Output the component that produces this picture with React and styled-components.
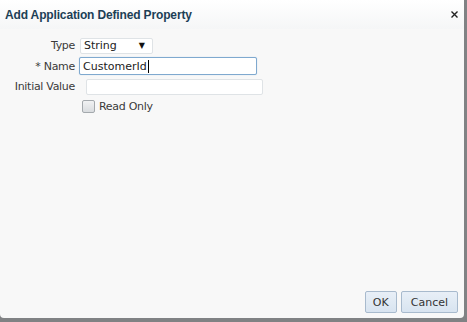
import React from "react";
import styled, { createGlobalStyle } from "styled-components";

const Global = createGlobalStyle`
  html, body { margin: 0; padding: 0; background: #7d7f81; }
  body { font-family: "DejaVu Sans", "Liberation Sans", sans-serif; }
`;

const Page = styled.div`
  width: 467px;
  height: 322px;
  background: #808284;
  overflow: hidden;
`;

const Dialog = styled.div`
  width: 464px;
  height: 318px;
  background: #f8f8f8;
  border-radius: 0 0 4px 4px;
  display: flex;
  flex-direction: column;
`;

const Header = styled.div`
  height: 29px;
  display: flex;
  align-items: center;
  justify-content: space-between;
  padding: 0 6px 0 5px;
  background: linear-gradient(#ffffff, #f5f6f7);
`;

const Title = styled.div`
  font-family: "Liberation Sans", Arial, sans-serif;
  font-weight: bold;
  font-size: 12px;
  color: #1d3f56;
  letter-spacing: -0.15px;
`;

const Close = styled.svg`
  width: 7px;
  height: 7px;
  display: block;
`;

const Body = styled.div`
  flex: 1;
  padding: 7px 0 0 0;
  display: flex;
  flex-direction: column;
  gap: 1px;
`;

const Row = styled.div`
  display: grid;
  grid-template-columns: ${({ $label }) => $label}px auto;
  column-gap: ${({ $gap }) => $gap}px;
  align-items: center;
  height: ${({ $h }) => $h || 19}px;
`;

const Label = styled.div`
  text-align: right;
  font-family: "DejaVu Sans", sans-serif;
  font-size: 11px;
  color: #3a3a3a;
  letter-spacing: -0.3px;
`;

const Select = styled.div`
  width: 73px;
  height: 16px;
  border: 1px solid #dfe3e6;
  border-radius: 2px;
  background: #fff;
  display: flex;
  align-items: center;
  justify-content: space-between;
  padding: 0 7px 0 3px;
  box-sizing: border-box;
  font-family: "DejaVu Sans", sans-serif;
  font-size: 11px;
  color: #222;
`;

const Arrow = styled.span`
  font-size: 8px;
  color: #111;
`;

const Input = styled.div`
  width: ${({ $w }) => $w}px;
  height: ${({ $focus }) => ($focus ? 18 : 16)}px;
  box-sizing: border-box;
  border: 1px solid ${({ $focus }) => ($focus ? "#7fa9cf" : "#dfe3e6")};
  box-shadow: ${({ $focus }) => ($focus ? "0 0 1px #a9c7e3" : "none")};
  border-radius: 2px;
  background: #fff;
  display: flex;
  align-items: center;
  padding-left: 3px;
  font-family: "DejaVu Sans", sans-serif;
  font-size: 11px;
  color: #222;
`;

const Caret = styled.span`
  display: inline-block;
  width: 1px;
  height: 13px;
  background: #000;
  margin-left: 1px;
`;

const CheckRow = styled.div`
  display: flex;
  align-items: center;
  gap: 4px;
  padding-left: 82px;
  height: 19px;
`;

const Box = styled.div`
  width: 11px;
  height: 11px;
  border: 1px solid #a4a9ad;
  border-radius: 2px;
  background: linear-gradient(#f1f2f3, #d9dcdf);
`;

const Footer = styled.div`
  display: flex;
  justify-content: flex-end;
  gap: 4px;
  padding: 0 6px 5px 0;
`;

const Button = styled.button`
  height: 22px;
  padding: 0 ${({ $px }) => $px}px;
  border: 1px solid #a8bacd;
  border-radius: 2px;
  background: linear-gradient(#e8eff7, #d8e4f0);
  font-family: "DejaVu Sans", sans-serif;
  font-size: 11px;
  color: #333;
`;

export default function App() {
  return (
    <Page>
      <Global />
      <Dialog>
        <Header>
          <Title>Add Application Defined Property</Title>
          <Close viewBox="0 0 7 7">
            <path d="M0.5 0.5 L6.5 6.5 M6.5 0.5 L0.5 6.5" stroke="#222" strokeWidth="1.4" />
          </Close>
        </Header>
        <Body>
          <Row $label={75} $gap={5}>
            <Label>Type</Label>
            <Select>
              String <Arrow>▼</Arrow>
            </Select>
          </Row>
          <Row $label={75} $gap={4} $h={20}>
            <Label>* Name</Label>
            <Input $w={178} $focus>
              CustomerId<Caret />
            </Input>
          </Row>
          <Row $label={75} $gap={11}>
            <Label>Initial Value</Label>
            <Input $w={177} />
          </Row>
          <CheckRow>
            <Box />
            <Label>Read Only</Label>
          </CheckRow>
        </Body>
        <Footer>
          <Button $px={7}>OK</Button>
          <Button $px={9}>Cancel</Button>
        </Footer>
      </Dialog>
    </Page>
  );
}
